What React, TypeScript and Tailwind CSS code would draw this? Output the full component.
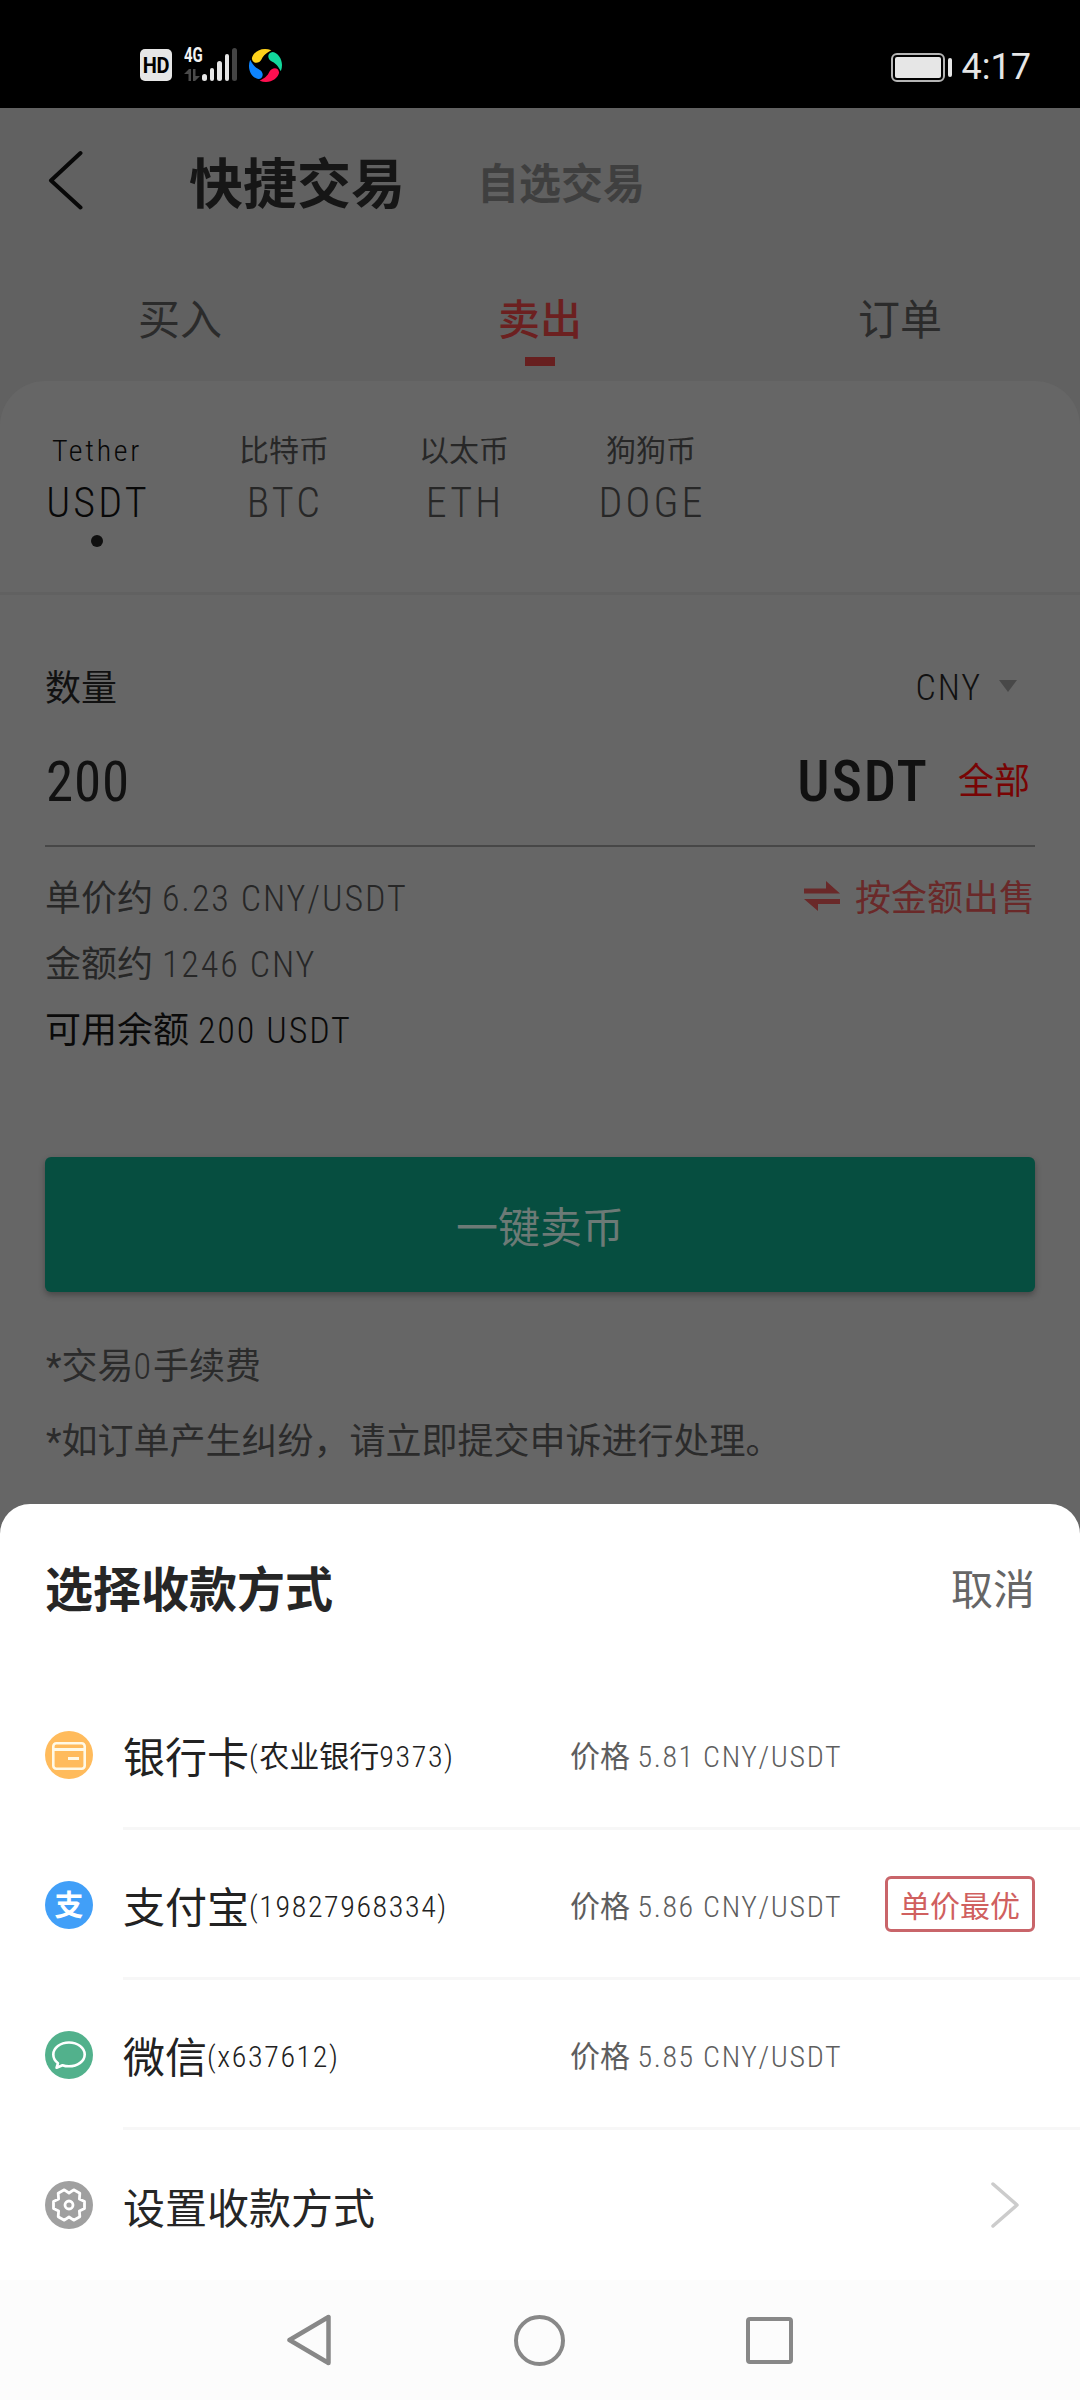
import type { ReactNode } from "react"

const coins = [
  { name: "Tether", symbol: "USDT", width: "w-[104px]", active: true },
  { name: "比特币", symbol: "BTC", width: "w-[90px]" },
  { name: "以太币", symbol: "ETH", width: "w-[90px]" },
  { name: "狗狗币", symbol: "DOGE", width: "w-[104px]" },
]

const methods = [
  { icon: <CardIcon />, name: "银行卡", bank: "农业银行", account: "9373", price: "5.81", best: false },
  { icon: <AlipayIcon />, name: "支付宝", bank: "", account: "19827968334", price: "5.86", best: true },
  { icon: <WechatIcon />, name: "微信", bank: "", account: "x637612", price: "5.85", best: false },
]

function CardIcon() {
  return (
    <svg viewBox="0 0 48 48" className="size-12 shrink-0" fill="none">
      <circle cx="24" cy="24" r="24" fill="#ffbb5c" />
      <rect x="8.3" y="12.2" width="31.4" height="25.6" rx="3" stroke="#fff9e6" strokeWidth="2.6" />
      <path d="M8.3 18.6h31.4M23 27.5h11" stroke="#fff9e6" strokeWidth="3" />
    </svg>
  )
}

function AlipayIcon() {
  return (
    <span className="flex size-12 shrink-0 items-center justify-center rounded-full bg-[#419ff8] pt-0.5 text-[29px] font-bold leading-none text-white">
      支
    </span>
  )
}

function WechatIcon() {
  return (
    <svg viewBox="0 0 48 48" className="size-12 shrink-0" fill="none">
      <circle cx="24" cy="24" r="24" fill="#52b18c" />
      <path
        d="M13 32.2C9.9 29.9 8.3 26.9 8.3 23.5C8.3 16.9 15.3 11.5 24 11.5S39.7 16.9 39.7 23.5S32.7 35.3 24 35.3C21.7 35.3 19.5 35 17.5 34.2L11.6 36.7Z"
        stroke="#fff"
        strokeWidth="2.6"
        strokeLinejoin="round"
      />
    </svg>
  )
}

function GearIcon() {
  return (
    <svg viewBox="0 0 48 48" className="size-12 shrink-0" fill="none" stroke="#fff" strokeWidth="2.8" strokeLinejoin="round">
      <circle cx="24" cy="24" r="24" fill="#a0a0a0" stroke="none" />
      <path d="M39.5 20.5V27.5L34.4 30L34.8 35.7L28.7 39.2L24 36L19.3 39.2L13.2 35.7L13.6 30L8.5 27.5V20.5L13.6 18L13.2 12.3L19.3 8.8L24 12L28.7 8.8L34.8 12.3L34.4 18Z" />
      <circle cx="24" cy="24" r="4" />
    </svg>
  )
}

const BLADE = "M24 2.2C14 -1.5 5.5 4 4 10.5C4.3 16.5 11.5 16.5 14 11.5C16 7 19 5 24 2.2Z"

function StatusBar() {
  return (
    <div className="flex h-[108px] items-start justify-between bg-black pl-[140px] pr-[49px] pt-12">
      <div className="flex">
        <span className="mt-px flex size-8 items-center justify-center rounded-[5px] bg-[#e6e6e6] text-black">
          <span className="scale-y-110 text-[20px] font-bold leading-none tracking-[-0.3px]">HD</span>
        </span>
        <div className="ml-3 flex w-[18px] flex-col">
          <span className="origin-left scale-x-75 text-[20px] font-bold leading-[15px] text-[#f2f2f2]">4G</span>
          <svg viewBox="0 0 18 12" className="mt-[6px] h-3 w-[18px]" fill="#4a4a4a">
            <path d="M0 5L5 0H7V12H4.5V5ZM9 0H11.5V7H16L11 12H9Z" />
          </svg>
        </div>
        <div className="flex h-[33px] items-end gap-[3px]">
          <span className="h-[7px] w-[4.5px] rounded-full bg-[#e6e6e6]" />
          <span className="h-[13px] w-[4.5px] rounded-full bg-[#e6e6e6]" />
          <span className="h-5 w-[4.5px] rounded-full bg-[#e6e6e6]" />
          <span className="h-[27px] w-[4.5px] rounded-full bg-[#e6e6e6]" />
          <span className="h-[33px] w-[4.5px] rounded-full bg-[#444]" />
        </div>
        <svg viewBox="0 0 36 36" className="ml-[11px] size-[35px]">
          <path d={BLADE} fill="#ffd21a" />
          <path d={BLADE} fill="#12d89b" transform="rotate(90 18 18)" />
          <path d={BLADE} fill="#ff0f50" transform="rotate(180 18 18)" />
          <path d={BLADE} fill="#0d84ff" transform="rotate(270 18 18)" />
        </svg>
      </div>
      <div className="flex items-center">
        <span className="mt-[3px] flex h-[29px] w-[54px] rounded-md border-2 border-[#b5b5b5] p-[2px]">
          <span className="flex-1 rounded-[2px] bg-[#e6e6e6]" />
        </span>
        <span className="ml-[3px] mt-[3px] h-[19px] w-1 rounded-full bg-[#e6e6e6]" />
        <span className="ml-[10px] mt-[3px] text-[36px] leading-8 text-[#e6e6e6]">4:17</span>
      </div>
    </div>
  )
}

function Header() {
  return (
    <div className="flex h-[150px] items-center pl-[48px]">
      <svg viewBox="0 0 36 60" className="-mt-[6px] h-[60px] w-9" fill="none" stroke="#080808" strokeWidth="4" strokeLinecap="round" strokeLinejoin="round">
        <path d="M32.5 3L3 30.5L32.5 57.5" />
      </svg>
      <h1 className="ml-[105px] mt-[5px] text-[54px] font-bold leading-[54px] text-[#161616]">快捷交易</h1>
      <span className="ml-[72px] mt-[3px] text-[42px] font-bold leading-[54px] text-[#3f3f3f]">自选交易</span>
    </div>
  )
}

function Tabs() {
  return (
    <div className="grid h-[123px] grid-cols-3 pt-[42px] text-center text-[42px] leading-[42px] text-[#2b2b2b]">
      <span>买入</span>
      <div className="flex flex-col items-center font-medium text-[#6c2020]">
        卖出
        <span className="mt-[15px] h-[9px] w-[30px] bg-[#671f1f]" />
      </div>
      <span>订单</span>
    </div>
  )
}

// condensed figures and capitals with open spacing
function Din({ children }: { children: ReactNode }) {
  return <span className="font-light tracking-[0.053em] [font-stretch:75%]">{children}</span>
}

function CoinPicker() {
  return (
    <div className="flex h-[214px] gap-[90px] border-b-[3px] border-[#616161] pl-[45px] pt-[52px]">
      {coins.map(coin => (
        <div
          key={coin.symbol}
          className={`flex flex-col items-center whitespace-nowrap ${coin.width} ${coin.active ? "text-[#080808]" : "text-[#272727]"}`}
        >
          <span className={`text-[30px] leading-[36px] ${coin.active ? "font-light tracking-[0.09em] [font-stretch:75%]" : ""}`}>
            {coin.name}
          </span>
          <span className="mt-[13px] pl-[2px] text-[42px] font-light leading-[42px] tracking-[0.075em] [font-stretch:75%]">
            {coin.symbol}
          </span>
          {coin.active && <span className="mt-[11px] size-3 rounded-full bg-[#0f0f0f]" />}
        </div>
      ))}
    </div>
  )
}

function Amount({ label, value }: { label: string; value: string }) {
  return (
    <span className="whitespace-pre">
      {label} <Din>{value}</Din>
    </span>
  )
}

function SellForm() {
  return (
    <div className="flex flex-1 flex-col px-[45px] text-[36px]">
      <div className="mt-[72px] flex h-[42px] items-center justify-between text-[#111]">
        <span className="pt-px">数量</span>
        <span className="flex items-center pr-[18px]">
          <Din>CNY</Din>
          <svg viewBox="0 0 18 12" className="-mt-1 ml-[17px] h-3 w-[18px]" fill="#484848">
            <path d="M0 0H18L9 12Z" />
          </svg>
        </span>
      </div>
      <div className="mt-[43px] flex h-[95px] items-start justify-between border-b-2 border-[#474747]">
        <span className="pl-px text-[55px] leading-[60px] tracking-[0.015em] text-[#111] [font-stretch:75%]">200</span>
        <span className="flex items-center">
          <span className="text-[57px] font-medium leading-[59px] tracking-[0.035em] text-[#111] [font-stretch:75%]">USDT</span>
          <span className="ml-[29px] pr-[5px] text-[#780404]">全部</span>
        </span>
      </div>
      <div className="mt-[19px] flex justify-between leading-[66px]">
        <div className="flex flex-col text-[#272727]">
          <Amount label="单价约" value="6.23 CNY/USDT" />
          <Amount label="金额约" value="1246 CNY" />
          <span className="text-[#0a0a0a]">
            <Amount label="可用余额" value="200 USDT" />
          </span>
        </div>
        <span className="flex h-[66px] items-center text-[#6a2929]">
          <svg viewBox="0 0 36 30" className="-mt-[6px] mr-[15px] h-[30px] w-9" fill="currentColor">
            <path d="M0 7.5H22V0L36 12.5H0ZM0 18H36V23H14V30Z" />
          </svg>
          按金额出售
        </span>
      </div>
      <div className="mt-[93px] flex h-[135px] items-center justify-center rounded-md bg-[#064e40] pt-[7px] text-[42px] text-[#6c7a76] shadow-[0_3px_6px_rgba(0,0,0,0.3)]">
        一键卖币
      </div>
      <p className="mt-[38px] pl-px leading-[74px] text-[#2b2b2b]">*交易<Din>0</Din>手续费</p>
      <p className="pl-px leading-[76px] text-[#2b2b2b]">*如订单产生纠纷，请立即提交申诉进行处理。</p>
    </div>
  )
}

function Row({ icon, children, last }: { icon: ReactNode; children: ReactNode; last?: boolean }) {
  return (
    <div className="flex h-[150px] items-center pl-[45px]">
      {icon}
      <div className={`ml-[30px] flex h-full flex-1 items-center pr-[45px] ${last ? "" : "border-b-[3px] border-[#f7f7f7]"}`}>
        {children}
      </div>
    </div>
  )
}

function PaymentSheet() {
  return (
    <div className="h-[776px] rounded-t-[30px] bg-white">
      <div className="flex h-[176px] items-center justify-between px-[45px] pb-[3px]">
        <h2 className="text-[48px] font-bold text-[#262626]">选择收款方式</h2>
        <span className="text-[42px] text-[#666]">取消</span>
      </div>
      {methods.map(m => (
        <Row key={m.name} icon={m.icon}>
          <div className="flex w-[447px] items-center whitespace-nowrap text-[#222]">
            <span className="pt-[9px] text-[42px]">{m.name}</span>
            <span className="pt-[6px] text-[30px]">
              <Din>(</Din>
              {m.bank}
              <Din>{m.account})</Din>
            </span>
          </div>
          <span className="whitespace-pre pt-[6px] text-[30px] text-[#5e5e5e]">
            价格 <Din>{m.price} CNY/USDT</Din>
          </span>
          {m.best && (
            <span className="ml-auto flex h-[56px] w-[150px] items-center justify-center rounded-md border-[3px] border-[#c9656a] pt-[5px] text-[30px] text-[#d0605f]">
              单价最优
            </span>
          )}
        </Row>
      ))}
      <Row icon={<GearIcon />} last>
        <span className="pt-[8px] text-[42px] text-[#262626]">设置收款方式</span>
        <svg viewBox="0 0 28 46" className="ml-auto mr-4 h-[46px] w-7" fill="none" stroke="#ccc" strokeWidth="3.5" strokeLinecap="round" strokeLinejoin="round">
          <path d="M2 2L26 23L2 44" />
        </svg>
      </Row>
    </div>
  )
}

function NavBar() {
  return (
    <div className="flex h-[120px] items-center bg-[#fcfcfc] pl-[286px]">
      <svg viewBox="0 0 46 52" className="h-[52px] w-[46px]" fill="none" stroke="#888" strokeWidth="4.5" strokeLinejoin="round">
        <path d="M42.5 3V49L3.5 26Z" />
      </svg>
      <span className="ml-[182px] size-[51px] rounded-full border-4 border-[#888]" />
      <span className="ml-[181px] size-[47px] rounded border-4 border-[#888]" />
    </div>
  )
}

export default function App() {
  return (
    <div className="flex h-[2400px] w-[1080px] flex-col overflow-hidden bg-[#666] font-[Roboto,'Noto_Sans_CJK_SC',sans-serif]">
      <StatusBar />
      <div className="flex h-[1396px] flex-col bg-[#616161]">
        <Header />
        <Tabs />
        <div className="flex flex-1 flex-col rounded-t-[45px] bg-[#666]">
          <CoinPicker />
          <SellForm />
        </div>
      </div>
      <PaymentSheet />
      <NavBar />
    </div>
  )
}
